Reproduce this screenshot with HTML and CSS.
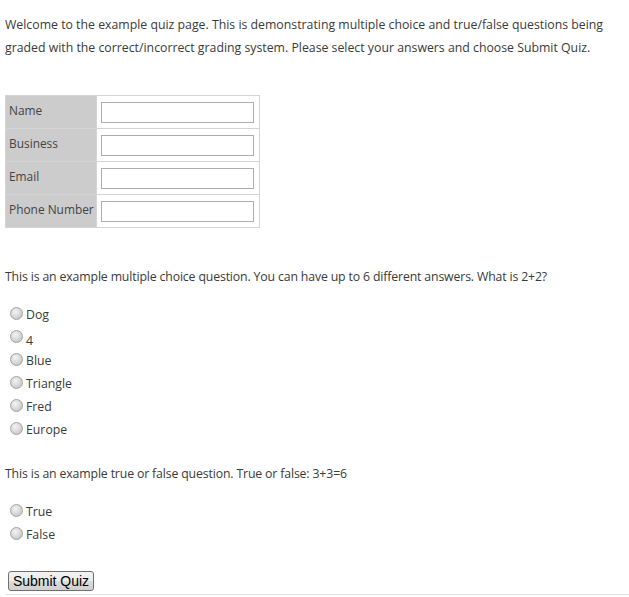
FILE: index.html
```html
<!DOCTYPE html>
<html>
<head>
<meta charset="utf-8">
<link rel="stylesheet" href="styles.css">
</head>
<body>
<div class="page">
  <p class="intro">Welcome to the example quiz page. This is demonstrating multiple choice and true/false questions being graded with the correct/incorrect grading system. Please select your answers and choose Submit Quiz.</p>

  <table class="contact">
    <tr><td class="lbl">Name</td><td class="fld"><input type="text" class="txt"></td></tr>
    <tr><td class="lbl">Business</td><td class="fld"><input type="text" class="txt"></td></tr>
    <tr><td class="lbl">Email</td><td class="fld"><input type="text" class="txt"></td></tr>
    <tr><td class="lbl">Phone Number</td><td class="fld"><input type="text" class="txt"></td></tr>
  </table>

  <p class="question q1">This is an example multiple choice question. You can have up to 6 different answers. What is 2+2?</p>
  <div class="options">
    <label class="opt"><span class="radio"></span>Dog</label>
    <label class="opt"><span class="radio"></span><span class="low">4</span></label>
    <label class="opt"><span class="radio"></span>Blue</label>
    <label class="opt"><span class="radio"></span>Triangle</label>
    <label class="opt"><span class="radio"></span>Fred</label>
    <label class="opt"><span class="radio"></span>Europe</label>
  </div>

  <p class="question q2">This is an example true or false question. True or false: 3+3=6</p>
  <div class="options">
    <label class="opt"><span class="radio"></span>True</label>
    <label class="opt"><span class="radio"></span>False</label>
  </div>

  <div class="submit-row"><button class="submit">Submit Quiz</button></div>
  <div class="rule"></div>
</div>
</body>
</html>
```
FILE: styles.css
```css
html, body {
  margin: 0;
  padding: 0;
  background: #fff;
}
.page {
  padding: 0 0 0 5px;
  font-family: "Open Sans", sans-serif;
  font-size: 12.3px;
  color: #3a3a3a;
}
.intro {
  margin: 13px 0 0 0;
  line-height: 23px;
  width: 620px;
}
.contact {
  margin-top: 36px;
  border-collapse: collapse;
  border: 1px solid #d4d4d4;
}
.contact td {
  border: 1px solid #d4d4d4;
  height: 28px;
  padding: 0;
  vertical-align: middle;
}
.contact .lbl {
  background: #cccccc;
  padding: 0 2px 4px 3px;
  color: #444;
  font-size: 11.9px;
  white-space: nowrap;
}
.contact .fld {
  padding: 2px 5px 2px 4px;
  background: #fff;
}
.txt {
  display: block;
  width: 153px;
  height: 21px;
  box-sizing: border-box;
  border: 1px solid #acacb4;
  margin: 0;
  padding: 0;
  background: #fff;
}
.question {
  margin: 0;
  line-height: 23px;
  letter-spacing: -0.15px;
}
.q1 {
  margin-top: 37px;
}
.q2 {
  margin-top: 21px;
}
.options {
  display: flex;
  flex-direction: column;
  margin-top: 15px;
  padding-left: 5px;
}
.opt {
  display: flex;
  align-items: center;
  height: 23px;
  gap: 3px;
}
.radio {
  display: inline-block;
  width: 11px;
  height: 11px;
  border-radius: 50%;
  border: 1px solid #a4a4a4;
  background: radial-gradient(circle at 40% 35%, #f4f4f4 0%, #d8d8d8 50%, #b8b8b8 100%);
  margin-top: -2px;
}
.low {
  position: relative;
  top: 3px;
}
.submit-row {
  margin-top: 25px;
  padding-left: 3px;
}
.submit {
  font-family: "Liberation Sans", Arial, sans-serif;
  font-size: 14px;
  color: #000;
  height: 20px;
  width: 86px;
  padding: 0;
  border: 1px solid #707070;
  border-radius: 3px;
  background: linear-gradient(#f2f2f2 0%, #ebebeb 50%, #dddddd 51%, #cfcfcf 100%);
  line-height: 16px;
}
.rule {
  margin-top: 3px;
  height: 1px;
  background: #e3e3e3;
}
```
